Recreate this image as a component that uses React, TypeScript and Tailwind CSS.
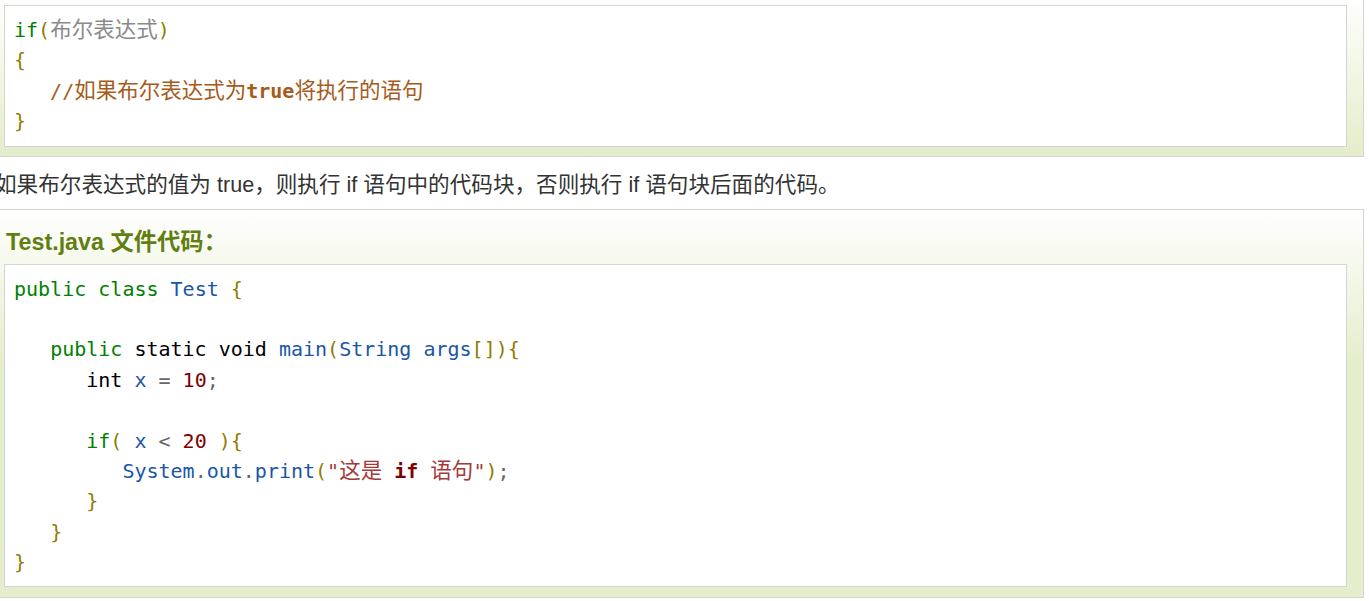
const mono = "font-['DejaVu_Sans_Mono','Noto_Sans_CJK_SC',monospace] text-[20px] leading-[30.4px]";

// token colours, eyeballed from the highlighter
const kw = 'text-[#008000]';
const typ = 'text-[#1a56a6]';
const pun = 'text-[#8f7c00]';
const lit = 'text-[#800000]';
const op = 'text-[#666666]';
const pln = 'text-black';
const com = 'text-[#a65b1a]';
const gray = 'text-[#8a8a8a]';
const str = 'text-[#a33a3a]';

type Tok = [string, string?, boolean?];

function Cjk({ children, className }: { children: string; className: string }) {
  return <span className={`text-[21.5px] leading-[30.4px] ${className}`}>{children}</span>;
}

function CodeLine({ toks }: { toks: Tok[] }) {
  return (
    <div className="whitespace-pre h-[30.4px]">
      {toks.map(([t, c = '', cjk], i) =>
        cjk ? (
          <Cjk key={i} className={c}>{t}</Cjk>
        ) : (
          <span key={i} className={c}>{t}</span>
        )
      )}
      {toks.length === 0 && ' '}
    </div>
  );
}

function CodeBox({ lines }: { lines: Tok[][] }) {
  return (
    <div className={`border border-[#d4d4d4] bg-white p-[9px] ${mono}`}>
      {lines.map((l, i) => (
        <CodeLine key={i} toks={l} />
      ))}
    </div>
  );
}

const syntax: Tok[][] = [
  [['if', kw], ['(', pun], ['布尔表达式', gray, true], [')', pun]],
  [['{', pun]],
  [['   //', com], ['如果布尔表达式为', com, true], ['true', `${com} font-bold`], ['将执行的语句', com, true]],
  [['}', pun]],
];

const example: Tok[][] = [
  [['public', kw], [' '], ['class', kw], [' '], ['Test', typ], [' '], ['{', pun]],
  [],
  [['   '], ['public', kw], [' static void ', pln], ['main', typ], ['(', pun], ['String', typ], [' '], ['args', typ], ['[])', pun], ['{', pun]],
  [['      '], ['int ', pln], ['x', typ], [' = ', op], ['10', lit], [';', op]],
  [],
  [['      '], ['if', kw], ['( ', pun], ['x', typ], [' < ', op], ['20', lit], [' ){', pun]],
  [['         '], ['System', typ], ['.', op], ['out', typ], ['.', op], ['print', typ], ['(', pun], ['"', str], ['这是', str, true], [' '], ['if', `${lit} font-bold`], [' '], ['语句', str, true], ['"', str], [')', pun], [';', op]],
  [['      '], ['}', pun]],
  [['   '], ['}', pun]],
  [['}', pun]],
];

export default function App() {
  return (
    <div className="w-full h-[601px] overflow-hidden bg-white">
      <div className="-ml-[7px] w-[1371px]">
        {/* syntax block */}
        <div className="-mt-[5px] border border-[#d4d4d4] bg-[linear-gradient(#fff,#e5eecc_150px)] pt-[9px] pb-[9px] pl-[10px] pr-[16px]">
          <CodeBox lines={syntax} />
        </div>

        <p className="mt-[13px] mb-[9px] pl-[2px] text-[21.6px] leading-[30px] text-[#333] font-['Liberation_Sans','Noto_Sans_CJK_SC',sans-serif]">
          如果布尔表达式的值为 true，则执行 if 语句中的代码块，否则执行 if 语句块后面的代码。
        </p>

        {/* example block */}
        <div className="border border-[#d4d4d4] bg-[linear-gradient(#fff,#e5eecc_150px)] pt-[17px] pb-[10px] pl-[10px] pr-[16px]">
          <h2 className="mb-[7px] pl-[2px] text-[23.3px] leading-[30px] font-bold text-[#617f10] font-['Liberation_Sans','Noto_Sans_CJK_SC',sans-serif]">
            Test.java 文件代码：
          </h2>
          <CodeBox lines={example} />
        </div>
      </div>
    </div>
  );
}
